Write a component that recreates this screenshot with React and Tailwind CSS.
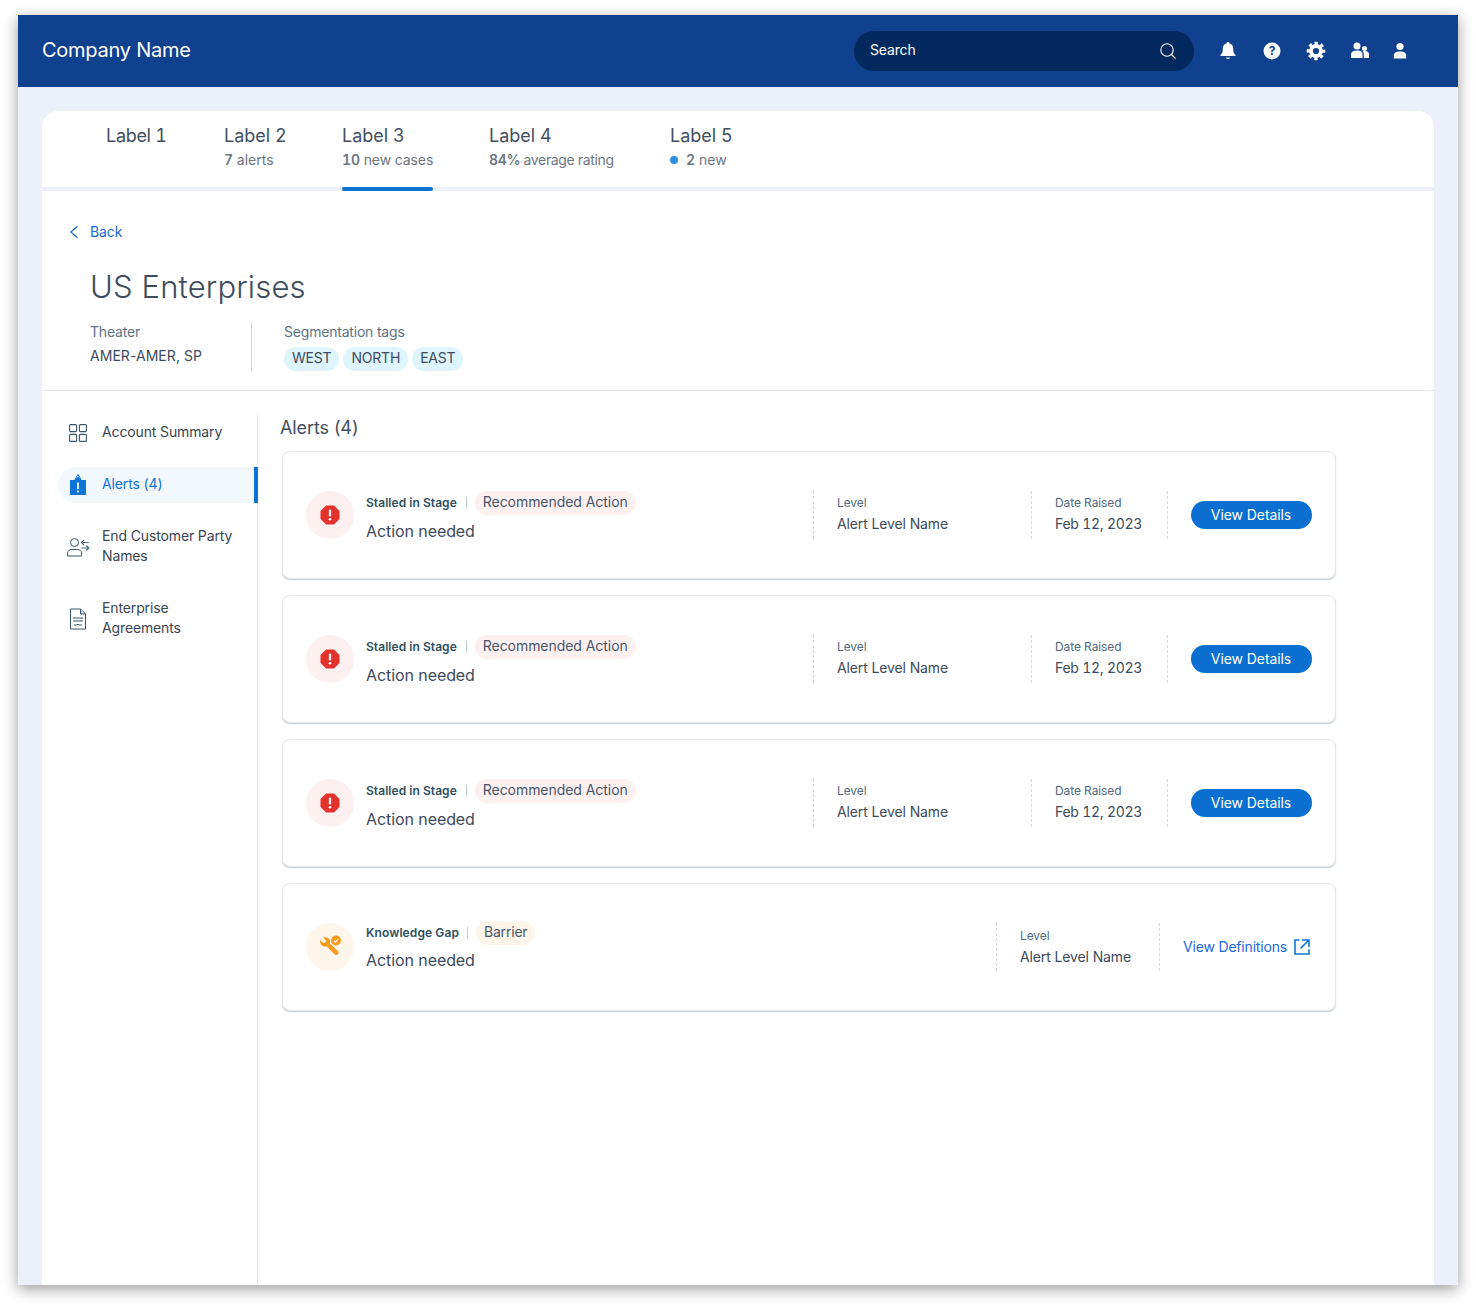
import React from "react";

const font = { fontFamily: "Inter, 'Liberation Sans', sans-serif" };

function Dash() {
  return <div className="h-12 w-0 border-l border-dashed border-[#d5dadf]" />;
}

function Octagon() {
  return (
    <svg width="20" height="20" viewBox="0 0 20 20">
      <polygon points="6,0.5 14,0.5 19.5,6 19.5,14 14,19.5 6,19.5 0.5,14 0.5,6" fill="#E3322E" />
      <rect x="8.9" y="4.5" width="2.2" height="7" rx="1.1" fill="#fff" />
      <circle cx="10" cy="14.2" r="1.3" fill="#fff" />
    </svg>
  );
}

function Wrench() {
  return (
    <svg width="24" height="24" viewBox="0 0 24 24">
      <path d="M2.6 5.6 5.8 8.6 8.4 6 5.4 2.8C8 1.6 11.4 3 12 6c.2 1 .1 1.8-.1 2.5l7.7 7.3c1.1 1.1 1.2 2.4.3 3.4-1 1-2.4.9-3.5-.2l-7.5-7.6c-3.4.9-6.9-1.4-6.9-4.9 0-.5.2-1.3.6-1.9Z" fill="#FB9A1E" />
      <circle cx="18" cy="5.5" r="5" fill="#FB9A1E" />
      <path d="M15.8 5.6 17.3 7.1 20.2 4.2" fill="none" stroke="#fff" strokeWidth="1.1" />
    </svg>
  );
}

function AlertCard({ title, tag, tagBg, circleBg, icon, last }) {
  return (
    <div className="flex h-[128px] w-[1054px] items-center rounded-[8px] border border-[#e3e7ea] bg-white pl-[23px] pr-[23px] shadow-[0_1px_1px_0_#bfcbd2]">
      <div className={`mr-[12px] flex h-12 w-12 shrink-0 items-center justify-center rounded-full ${circleBg}`}>{icon}</div>
      <div className={`flex-1 ${last ? "pb-[2px]" : "pt-[3px]"}`}>
        <div className="flex items-center">
          <span className={`text-[12px] font-semibold leading-[24px] text-[#2f4f60] ${last ? "tracking-[0.1px]" : "tracking-[0.05px]"}`}>{title}</span>
          <span className={`${last ? "ml-[8px]" : "ml-[9px]"} mr-[8px] h-[12px] w-px bg-[#c9ced2]`} />
          <span className={`rounded-full px-[8px] pb-[2px] text-[14px] leading-[22px] text-[#49566a] ${last ? "tracking-[-0.2px]" : "tracking-[-0.05px]"} ${tagBg}`}>{tag}</span>
        </div>
        <div className={`${last ? "mt-[3px]" : "mt-[4px]"} text-[16px] leading-[24px] tracking-[-0.08px] text-[#3d4a5c]`}>Action needed</div>
      </div>
      {last ? (
        <>
          <Dash />
          <div className="w-[162px] pl-[23px] pt-[1px]">
            <div className="text-[12px] leading-[18px] tracking-[-0.1px] text-[#4f6b7d]">Level</div>
            <div className="mt-[1px] text-[14px] leading-[22px] tracking-[-0.12px] text-[#3d4a5c]">Alert Level Name</div>
          </div>
          <Dash />
          <a className="ml-[23px] flex items-center text-[14px] tracking-[-0.18px] text-[#1a6ad8]">
            <span className="pb-[1px]">View Definitions</span>
            <svg className="ml-[6px]" width="18" height="18" viewBox="0 0 18 18" fill="none" stroke="#0D74D8" strokeWidth="1.6">
              <path d="M6.5 2H2v14h14v-4.5M9 2h7v7M16 2 7.5 10.5" />
            </svg>
          </a>
          <div className="w-[1px]" />
        </>
      ) : (
        <>
          <Dash />
          <div className="w-[217px] pl-[23px] pb-[1px]">
            <div className="text-[12px] leading-[18px] tracking-[-0.1px] text-[#4f6b7d]">Level</div>
            <div className="mt-[1px] text-[14px] leading-[22px] tracking-[-0.12px] text-[#3d4a5c]">Alert Level Name</div>
          </div>
          <Dash />
          <div className="w-[135px] pl-[23px] pb-[1px]">
            <div className="text-[12px] leading-[18px] tracking-[-0.1px] text-[#4f6b7d]">Date Raised</div>
            <div className="mt-[1px] text-[14px] leading-[22px] tabular-nums tracking-[-0.25px] text-[#3d4a5c]">Feb 12, 2023</div>
          </div>
          <Dash />
          <button className="ml-[23px] h-[28px] w-[121px] rounded-full bg-[#0A6FD1] pb-[2px] pr-[1px] text-[14px] tracking-[-0.08px] text-white">View Details</button>
        </>
      )}
    </div>
  );
}

function Tab({ label, sub, active, cls, subCls, labelCls }) {
  return (
    <div className={`relative h-[76px] pt-[12px] ${cls || ""}`}>
      <div className={`whitespace-nowrap text-[18px] leading-[26px] tabular-nums text-[#434f61] ${labelCls || ""}`}>{label}</div>
      {sub && <div className={`mt-[1px] whitespace-nowrap text-[14px] leading-[20px] tabular-nums text-[#6d7680] ${subCls || ""}`}>{sub}</div>}
      {active && <div className="absolute bottom-[-4px] left-0 h-[4px] w-full rounded-[2px] bg-[#0A74D6]" />}
    </div>
  );
}

function Tag({ children }) {
  return <span className="rounded-full bg-[#DFF5FD] px-[8px] pb-[2px] text-[14px] leading-[22px] tracking-[-0.2px] text-[#3d4a5c]">{children}</span>;
}

export default function App() {
  return (
    <div style={font} className="h-[1307px] w-[1476px] overflow-hidden bg-white pl-[18px] pt-[15px]">
      <div className="flex h-[1270px] w-[1440px] flex-col bg-[#EBF0FA] shadow-[0_4px_14px_rgba(0,0,0,0.4)]">
        <header className="flex h-[72px] shrink-0 items-center bg-[#0F418F] pl-[24px]">
          <div className="pb-[2px] text-[20px] tracking-[-0.25px] text-white">Company Name</div>
          <div className="ml-auto flex h-[40px] w-[340px] items-center justify-between rounded-full bg-[#04295F] pl-[16px] pr-[17px]">
            <span className="pb-[3px] text-[14px] tracking-[-0.15px] text-white">Search</span>
            <svg width="18" height="18" viewBox="0 0 18 18" fill="none" stroke="#fff" strokeWidth="1.1">
              <circle cx="8" cy="8" r="6.2" />
              <path d="M12.5 12.5 16.5 16.5" />
            </svg>
          </div>
          <div className="ml-[24px] mr-[50px] flex items-center gap-[24px]">
            <svg width="20" height="20" viewBox="0 0 20 20" fill="#fff">
              <path d="M10 1c.8 0 1.200.5 1.300 1.300 2.600.6 3.900 2.700 3.900 5.400 0 3 .6 4.800 2.300 6.100v1.200h-15v-1.200c1.700-1.300 2.300-3.100 2.300-6.100 0-2.700 1.300-4.800 3.900-5.400C8.800 1.500 9.200 1 10 1Z" />
              <path d="M7.800 16.500h4.400c-.3.900-1.100 1.500-2.200 1.500s-1.900-.6-2.200-1.500Z" />
            </svg>
            <svg width="20" height="20" viewBox="0 0 20 20">
              <circle cx="10" cy="10" r="8.5" fill="#fff" />
              <text x="10" y="14.3" textAnchor="middle" fontSize="12" fontWeight="700" fill="#0F418F" fontFamily="Inter, sans-serif">?</text>
            </svg>
            <svg width="20" height="20" viewBox="0 0 20 20">
              <circle cx="10" cy="10" r="5" fill="none" stroke="#fff" strokeWidth="3.800" />
              <circle cx="10" cy="10" r="7.800" fill="none" stroke="#fff" strokeWidth="3" strokeDasharray="3.300 2.826" strokeDashoffset="1.650" />
            </svg>
            <svg width="20" height="20" viewBox="0 0 20 20" fill="#fff">
              <circle cx="7" cy="5" r="3.500" />
              <path d="M1 17v-3.500C1 11 3 9.500 7 9.500s5.500 1.500 5.500 4V17Z" />
              <circle cx="14.500" cy="7.500" r="2.500" />
              <path d="M13.800 17v-4c0-1.200-.5-2-1.200-2.500.6-.3 1.200-.4 2-.4 2.700 0 4.400 1.200 4.400 3.200V17Z" />
            </svg>
            <svg className="-ml-[2px]" width="16" height="20" viewBox="0 0 16 20" fill="#fff">
              <circle cx="8" cy="5.500" r="3.600" />
              <path d="M1.800 17.500v-3.200c0-2.300 2.400-3.700 6.200-3.700s6.200 1.400 6.200 3.700v3.200Z" />
            </svg>
          </div>
        </header>

        <div className="flex min-h-0 flex-1 px-[24px] pt-[24px]">
          <div className="flex w-[1392px] flex-col rounded-t-[16px] bg-white">
            <div className="flex h-[80px] shrink-0 gap-[56px] border-b-[4px] border-[#EBF0FA] pl-[64px]">
              <Tab label="Label 1" cls="w-[62px]" labelCls="tracking-[-0.3px]" />
              <Tab label="Label 2" cls="w-[62px]" sub={<><b className="font-semibold">7</b> alerts</>} />
              <Tab label="Label 3" active cls="w-[91px]" subCls="tracking-[-0.08px]" sub={<><b className="font-semibold">10</b> new cases</>} />
              <Tab label="Label 4" cls="w-[125px]" subCls="tracking-[-0.35px]" sub={<><b className="font-semibold">84%</b> average rating</>} />
              <Tab label="Label 5" sub={<span className="flex items-center"><span className="mr-[8px] h-[8px] w-[8px] rounded-full bg-[#2C8FE0]" /><b className="mr-[4px] font-semibold">2</b> new</span>} />
            </div>

            <div className="h-[200px] shrink-0 border-b border-[#e5e7e9] pl-[24px]">
              <a className="mt-[31px] flex h-[20px] items-center text-[14px] leading-[20px] tracking-[-0.1px] text-[#1a6ad8]">
                <svg className="mr-[10px]" width="14" height="14" viewBox="0 0 14 14" fill="none" stroke="#1a6ad8" strokeWidth="1.2">
                  <path d="M11.500 1.200 4.800 7l6.700 5.800" />
                </svg>
                Back
              </a>
              <div className="ml-[24px] mt-[25px] text-[31px] font-light leading-[40px] tracking-[0.15px] text-[#3f4c5e]">US Enterprises</div>
              <div className="ml-[24px] mt-[15px] flex">
                <div className="h-[49px] w-[162px] border-r border-[#d5d8dc]">
                  <div className="text-[14px] leading-[20px] tracking-[-0.2px] text-[#5d7484]">Theater</div>
                  <div className="mt-[4px] text-[14px] leading-[20px] tracking-[0.05px] text-[#3d4a5c]">AMER-AMER, SP</div>
                </div>
                <div className="pl-[32px]">
                  <div className="text-[14px] leading-[20px] tracking-[-0.2px] text-[#5d7484]">Segmentation tags</div>
                  <div className="mt-[5px] flex gap-[4px]">
                    <Tag>WEST</Tag>
                    <Tag>NORTH</Tag>
                    <Tag>EAST</Tag>
                  </div>
                </div>
              </div>
            </div>

            <div className="flex min-h-0 flex-1 pt-[24px]">
              <nav className="w-[216px] shrink-0 border-r border-[#e5e7e9] pl-[16px] text-[14px] leading-[20px] tracking-[-0.13px] text-[#3a4452]">
                <div className="flex h-[36px] items-center pl-[11px]">
                  <svg className="mr-[15px]" width="18" height="18" viewBox="0 0 18 18" fill="none" stroke="#36566b" strokeWidth="1.100">
                    <rect x="0.600" y="0.600" width="7" height="7" rx="1" />
                    <rect x="10.400" y="0.600" width="7" height="7" rx="1" />
                    <rect x="0.600" y="10.400" width="7" height="7" rx="1" />
                    <rect x="10.400" y="10.400" width="7" height="7" rx="1" />
                  </svg>
                  <span className="pb-[2px]">Account Summary</span>
                </div>
                <div className="relative mt-[16px] flex h-[36px] items-center rounded-l-full bg-[#F2F8FE] pl-[10px] text-[#0D74D8]">
                  <svg className="mr-[14px]" width="20" height="24" viewBox="0 0 20 24">
                    <path d="M2 7h4.500L10 3.500 13.500 7H18v15H2Z" fill="#0D74D8" />
                    <path d="M7 6.500 10 1.500l3 5" fill="none" stroke="#0D74D8" strokeWidth="1" />
                    <rect x="9.100" y="9.500" width="1.800" height="6.500" fill="#fff" />
                    <rect x="9.100" y="17.500" width="1.800" height="2" fill="#fff" />
                  </svg>
                  <span className="pb-[2px]">Alerts (4)</span>
                  <div className="absolute right-[-1px] top-0 h-full w-[4px] bg-[#0A74D6]" />
                </div>
                <div className="mt-[16px] flex h-[56px] items-center pl-[9px]">
                  <svg className="mr-[12px] shrink-0" width="23" height="19" viewBox="0 0 23 19" fill="none" stroke="#36566b" strokeWidth="1">
                    <circle cx="7.500" cy="4.500" r="4" />
                    <path d="M.6 18v-3c0-2 2-3.500 4-3.500h6c2 0 4 1.500 4 3.500v3Z" />
                    <path d="M21.800 4.500H14.500M17 2 14.500 4.500 17 7M14.500 10H21.800M19.300 7.500 21.800 10 19.300 12.500" stroke="#4f6b7d" strokeWidth="1.200" />
                  </svg>
                  <div className="pb-[2px]">End Customer Party<br />Names</div>
                </div>
                <div className="mt-[16px] flex h-[56px] items-center pl-[10px]">
                  <svg className="mr-[14px] shrink-0" width="20" height="22" viewBox="0 0 20 22" fill="none" stroke="#36566b" strokeWidth="1">
                    <path d="M2.500 1h10L17.500 6v15h-15Z" />
                    <path d="M12.500 1v5h5" fill="#c5d0d8" />
                    <path d="M5 10h10M5 13h10M6 17h3l1-1 1 1h3" />
                  </svg>
                  <div className="pb-[2px]">Enterprise<br />Agreements</div>
                </div>
              </nav>
              <main className="pl-[24px]">
                <div className="-ml-[2px] pt-[1px] text-[18px] leading-[24px] tracking-[-0.1px] text-[#434f61]">Alerts (4)</div>
                <div className="mt-[11px] flex flex-col gap-[16px]">
                  {[0, 1, 2].map((i) => (
                    <AlertCard
                      key={i}
                      title="Stalled in Stage"
                      tag="Recommended Action"
                      tagBg="bg-[#FCF0F1]"
                      circleBg="bg-[#FCF0F1]"
                      icon={<Octagon />}
                    />
                  ))}
                  <AlertCard
                    last
                    title="Knowledge Gap"
                    tag="Barrier"
                    tagBg="bg-[#FEF6EB]"
                    circleBg="bg-[#FEF6EB]"
                    icon={<Wrench />}
                  />
                </div>
              </main>
            </div>
          </div>
        </div>
      </div>
    </div>
  );
}
